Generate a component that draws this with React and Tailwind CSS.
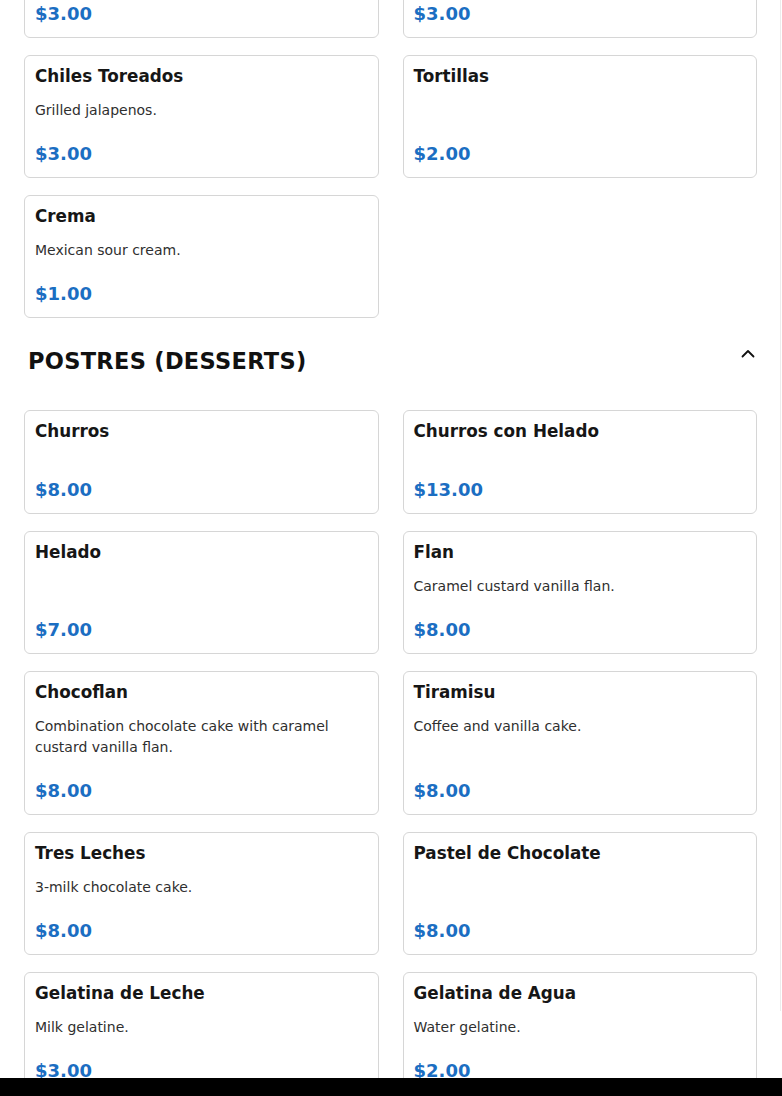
import React from "react";

const rows = [
  [
    { name: "Pico de Gallo", desc: "Fresh tomato salsa.", price: "$3.00" },
    { name: "Frijoles", desc: "Refried beans.", price: "$3.00" },
  ],
  [
    { name: "Chiles Toreados", desc: "Grilled jalapenos.", price: "$3.00" },
    { name: "Tortillas", price: "$2.00" },
  ],
  [{ name: "Crema", desc: "Mexican sour cream.", price: "$1.00" }],
];

const desserts = [
  [
    { name: "Churros", price: "$8.00" },
    { name: "Churros con Helado", price: "$13.00" },
  ],
  [
    { name: "Helado", price: "$7.00" },
    { name: "Flan", desc: "Caramel custard vanilla flan.", price: "$8.00" },
  ],
  [
    {
      name: "Chocoflan",
      desc: "Combination chocolate cake with caramel custard vanilla flan.",
      price: "$8.00",
    },
    { name: "Tiramisu", desc: "Coffee and vanilla cake.", price: "$8.00" },
  ],
  [
    { name: "Tres Leches", desc: "3-milk chocolate cake.", price: "$8.00" },
    { name: "Pastel de Chocolate", price: "$8.00" },
  ],
  [
    { name: "Gelatina de Leche", desc: "Milk gelatine.", price: "$3.00" },
    { name: "Gelatina de Agua", desc: "Water gelatine.", price: "$2.00" },
  ],
];

function Card({ item }) {
  return (
    <div className="flex flex-col min-h-[104px] rounded-md border border-[#d6d6d6] bg-white pt-[10px] pb-[11px] px-[10px]">
      <div className="text-[16.8px] leading-[20px] font-bold text-[#161616]">{item.name}</div>
      {item.desc && (
        <div className="mt-[14px] text-[14px] leading-[21px] text-[#2f2f2f]">{item.desc}</div>
      )}
      <div className="mt-auto pt-[21px] text-[18px] leading-[24px] font-bold text-[#1b6ec2]">
        {item.price}
      </div>
    </div>
  );
}

function Grid({ data, className = "" }) {
  return (
    <div className={"grid grid-cols-2 gap-x-6 gap-y-[17px] " + className}>
      {data.flat().map((item, i) => (
        <Card key={i} item={item} />
      ))}
    </div>
  );
}

export default function App() {
  return (
    <div
      className="relative h-[1096px] overflow-hidden bg-white"
      style={{ fontFamily: '"DejaVu Sans", sans-serif' }}
    >
      <div className="w-[781px] h-full border-r border-[#ececec]">
        <div className="pl-6 pr-[23px]">
          <Grid data={rows} className="-mt-[85px]" />
          <div className="flex items-start justify-between pl-1 mt-[28px] mb-[34px]">
            <h2 className="text-[22.5px] leading-[30px] font-bold tracking-[0.3px] text-[#111]">
              POSTRES (DESSERTS)
            </h2>
            <svg
              width="14"
              height="9"
              viewBox="0 0 14 9"
              className="mt-[3px] mr-[2px]"
              fill="none"
              stroke="#111"
              strokeWidth="1.8"
              strokeLinecap="round"
              strokeLinejoin="round"
            >
              <polyline points="1.5,7.5 7,2 12.5,7.5" />
            </svg>
          </div>
          <Grid data={desserts} />
        </div>
      </div>
      <div className="absolute left-0 right-0 bottom-0 h-[18px] bg-black" />
    </div>
  );
}
